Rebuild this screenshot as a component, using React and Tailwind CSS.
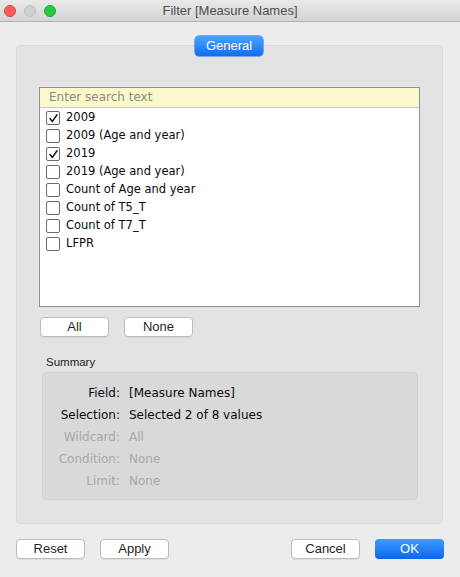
import { useState } from "react";

const ITEMS = [
  { label: "2009", checked: true },
  { label: "2009 (Age and year)", checked: false },
  { label: "2019", checked: true },
  { label: "2019 (Age and year)", checked: false },
  { label: "Count of Age and year", checked: false },
  { label: "Count of T5_T", checked: false },
  { label: "Count of T7_T", checked: false },
  { label: "LFPR", checked: false },
];

const SUMMARY = [
  { k: "Field:", v: "[Measure Names]", on: true },
  { k: "Selection:", v: "Selected 2 of 8 values", on: true },
  { k: "Wildcard:", v: "All", on: false },
  { k: "Condition:", v: "None", on: false },
  { k: "Limit:", v: "None", on: false },
];

const sys = "font-['Liberation_Sans',Arial,sans-serif]";
const lucida = "font-['DejaVu_Sans',sans-serif]";

function Check({ checked }) {
  return (
    <span className="flex h-[14px] w-[14px] items-center justify-center rounded-[2px] border border-[#6b6b6b] bg-white">
      {checked && (
        <svg width="11" height="11" viewBox="0 0 11 11">
          <path d="M2 5.6 L4.4 8.4 L9 1.8" fill="none" stroke="#111" strokeWidth="1.5" strokeLinecap="round" strokeLinejoin="round" />
        </svg>
      )}
    </span>
  );
}

function Btn({ children, className = "" }) {
  return (
    <button
      className={`flex h-[20px] w-[69px] items-center justify-center rounded-[4px] border border-[#bcbcbc] bg-white text-[13px] text-[#1f1f1f] shadow-[0_1px_0_rgba(0,0,0,0.06)] ${sys} ${className}`}
    >
      {children}
    </button>
  );
}

export default function App() {
  const [items, setItems] = useState(ITEMS);

  return (
    <div className="flex h-[577px] w-[460px] flex-col bg-[#ececec]">
      {/* title bar */}
      <div className="grid h-[22px] grid-cols-[1fr_auto_1fr] items-center border-b border-[#b3b3b3] bg-gradient-to-b from-[#e9e9e9] to-[#d4d4d4]">
        <div className="flex items-center gap-[8px] pl-[4px]">
          <span className="h-[12px] w-[12px] rounded-full border border-[#e0443e] bg-[#fd5f57]" />
          <span className="h-[12px] w-[12px] rounded-full border border-[#bfbfbf] bg-[#d0d0d0]" />
          <span className="h-[12px] w-[12px] rounded-full border border-[#1aab29] bg-[#27c93f]" />
        </div>
        <div className={`text-[13px] text-[#4d4d4d] ${sys}`}>Filter [Measure Names]</div>
        <div />
      </div>

      {/* tab */}
      <div className="relative z-10 mt-[14px] -mb-[11px] flex justify-center pr-[2px]">
        <div className={`flex h-[20px] w-[68px] items-center justify-center rounded-[4px] bg-gradient-to-b from-[#4ba3ff] to-[#0a6df2] text-[13px] text-white shadow-[0_0_0_0.5px_#0c64d6] ${sys}`}>
          General
        </div>
      </div>

      {/* panel */}
      <div className="mx-[16px] flex h-[479px] w-[427px] flex-col rounded-[4px] border border-[#d9d9d9] bg-[#e3e3e3] pt-[41px] pl-[22px]">
        <div className="flex h-[220px] w-[381px] flex-col border border-[#8e9096] bg-white">
          <div className={`h-[20px] border-b border-[#c9c9c9] bg-[#fbf8cd] pl-[9px] text-[12px] leading-[19px] text-[#8c8c80] ${lucida}`}>
            Enter search text
          </div>
          <div className="flex flex-col pt-[1px]">
            {items.map((it, i) => (
              <div
                key={it.label}
                className="flex h-[18px] cursor-default items-center gap-[6px] pl-[6px]"
                onClick={() => setItems(items.map((x, j) => (j === i ? { ...x, checked: !x.checked } : x)))}
              >
                <Check checked={it.checked} />
                <span className={`text-[11.5px] text-[#0a0a0a] ${lucida}`}>{it.label}</span>
              </div>
            ))}
          </div>
        </div>

        <div className="mt-[10px] flex gap-[15px] pl-[1px]">
          <Btn>All</Btn>
          <Btn>None</Btn>
        </div>

        <div className={`mt-[18px] pl-[7px] text-[11.5px] leading-[14px] text-[#222] ${sys}`}>Summary</div>

        <div className="mt-[3px] ml-[3px] flex h-[128px] w-[376px] flex-col rounded-[4px] border border-[#d2d2d2] bg-[#d9d9d9] pt-[9px]">
          {SUMMARY.map((r) => (
            <div key={r.k} className={`flex h-[22px] items-center text-[12px] ${lucida} ${r.on ? "text-[#0a0a0a]" : "text-[#a8a8a8]"}`}>
              <span className="w-[77px] text-right">{r.k}</span>
              <span className="ml-[9px]">{r.v}</span>
            </div>
          ))}
        </div>
      </div>

      {/* footer buttons */}
      <div className="mt-[15px] flex items-center px-[16px]">
        <Btn>Reset</Btn>
        <Btn className="ml-[15px]">Apply</Btn>
        <Btn className="ml-auto">Cancel</Btn>
        <button
          className={`ml-[15px] flex h-[20px] w-[69px] items-center justify-center rounded-[4px] bg-gradient-to-b from-[#3d9bfd] to-[#0866ef] text-[13px] text-white ${sys}`}
        >
          OK
        </button>
      </div>
    </div>
  );
}
